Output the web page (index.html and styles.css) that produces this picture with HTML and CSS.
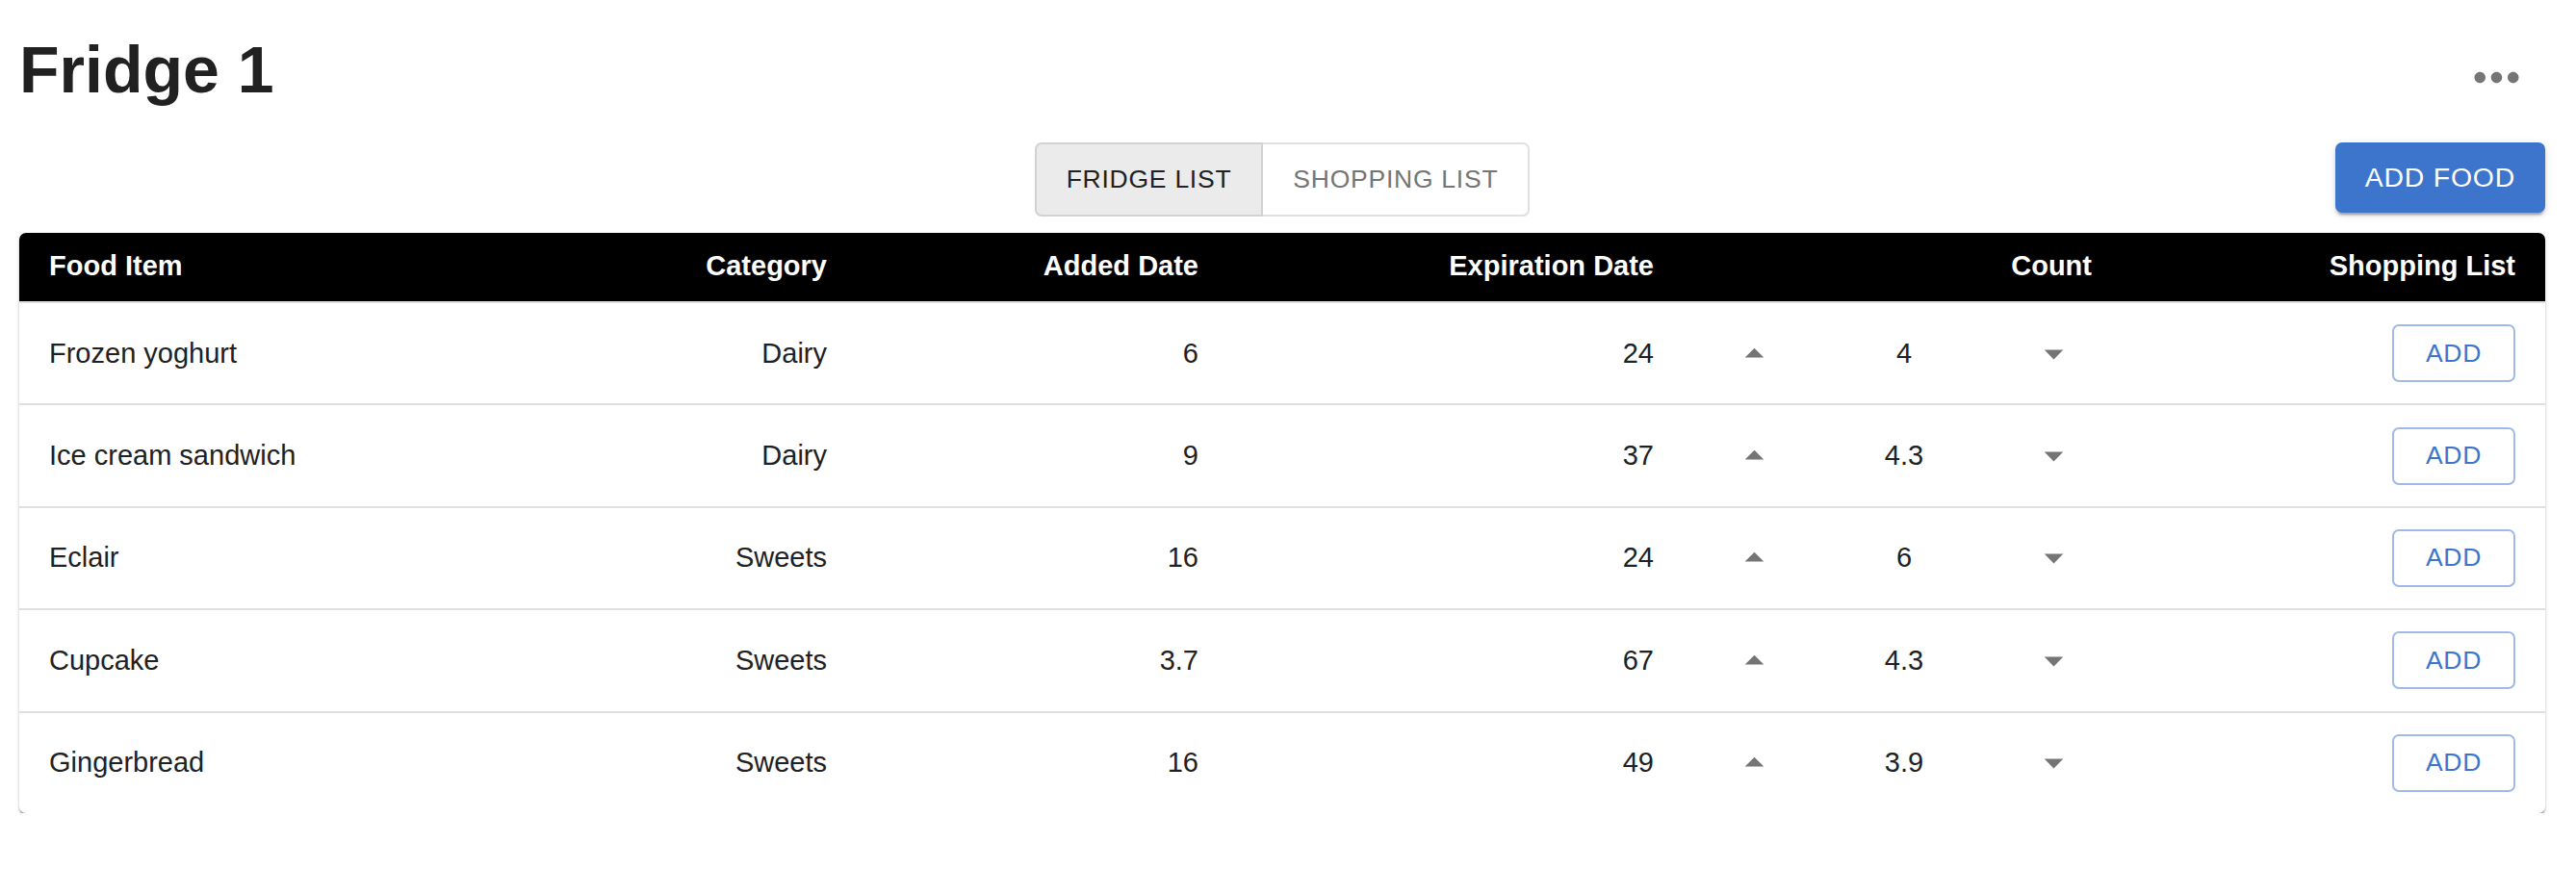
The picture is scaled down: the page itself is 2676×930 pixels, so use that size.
FILE: index.html
```html
<!DOCTYPE html>
<html lang="en">
<head>
<meta charset="utf-8">
<title>Fridge 1</title>
<link rel="stylesheet" href="styles.css">
</head>
<body>
<div class="page">
  <div class="titlebar">
    <h1 class="title">Fridge 1</h1>
    <button class="more-btn" aria-label="more">
      <svg class="more-icon" viewBox="0 0 24 24"><path d="M6 10c-1.1 0-2 .9-2 2s.9 2 2 2 2-.9 2-2-.9-2-2-2zm12 0c-1.1 0-2 .9-2 2s.9 2 2 2 2-.9 2-2-.9-2-2-2zm-6 0c-1.1 0-2 .9-2 2s.9 2 2 2 2-.9 2-2-.9-2-2-2z"/></svg>
    </button>
  </div>
  <div class="toolbar">
    <div class="spacer"></div>
    <div class="toggle">
      <button class="toggle-btn selected">FRIDGE LIST</button>
      <button class="toggle-btn">SHOPPING LIST</button>
    </div>
    <button class="add-food">ADD FOOD</button>
  </div>
  <div class="card">
    <table class="food-table">
      <colgroup>
        <col class="c1"><col class="c2"><col class="c3"><col class="c4"><col class="c5"><col class="c6">
      </colgroup>
      <thead>
        <tr>
          <th class="left">Food Item</th>
          <th>Category</th>
          <th>Added Date</th>
          <th>Expiration Date</th>
          <th>Count</th>
          <th>Shopping List</th>
        </tr>
      </thead>
      <tbody>
        <tr>
          <td class="left">Frozen yoghurt</td><td>Dairy</td><td>6</td><td>24</td>
          <td><div class="counter"><span class="arrow-btn"><svg viewBox="0 0 24 24"><path d="M7 14l5-5 5 5z"/></svg></span><span class="count">4</span><span class="arrow-btn"><svg viewBox="0 0 24 24"><path d="M7 10l5 5 5-5z"/></svg></span></div></td>
          <td><button class="add-btn">ADD</button></td>
        </tr>
        <tr>
          <td class="left">Ice cream sandwich</td><td>Dairy</td><td>9</td><td>37</td>
          <td><div class="counter"><span class="arrow-btn"><svg viewBox="0 0 24 24"><path d="M7 14l5-5 5 5z"/></svg></span><span class="count">4.3</span><span class="arrow-btn"><svg viewBox="0 0 24 24"><path d="M7 10l5 5 5-5z"/></svg></span></div></td>
          <td><button class="add-btn">ADD</button></td>
        </tr>
        <tr>
          <td class="left">Eclair</td><td>Sweets</td><td>16</td><td>24</td>
          <td><div class="counter"><span class="arrow-btn"><svg viewBox="0 0 24 24"><path d="M7 14l5-5 5 5z"/></svg></span><span class="count">6</span><span class="arrow-btn"><svg viewBox="0 0 24 24"><path d="M7 10l5 5 5-5z"/></svg></span></div></td>
          <td><button class="add-btn">ADD</button></td>
        </tr>
        <tr>
          <td class="left">Cupcake</td><td>Sweets</td><td>3.7</td><td>67</td>
          <td><div class="counter"><span class="arrow-btn"><svg viewBox="0 0 24 24"><path d="M7 14l5-5 5 5z"/></svg></span><span class="count">4.3</span><span class="arrow-btn"><svg viewBox="0 0 24 24"><path d="M7 10l5 5 5-5z"/></svg></span></div></td>
          <td><button class="add-btn">ADD</button></td>
        </tr>
        <tr>
          <td class="left">Gingerbread</td><td>Sweets</td><td>16</td><td>49</td>
          <td><div class="counter"><span class="arrow-btn"><svg viewBox="0 0 24 24"><path d="M7 14l5-5 5 5z"/></svg></span><span class="count">3.9</span><span class="arrow-btn"><svg viewBox="0 0 24 24"><path d="M7 10l5 5 5-5z"/></svg></span></div></td>
          <td><button class="add-btn">ADD</button></td>
        </tr>
      </tbody>
    </table>
  </div>
</div>
</body>
</html>
```

FILE: styles.css
```css
* { box-sizing: border-box; }
html, body { margin: 0; padding: 0; background: #fff; }
body {
  font-family: "Liberation Sans", Arial, Helvetica, sans-serif;
  color: #212121;
}
.page {
  padding: 30px 32px 0 20px;
}
.titlebar {
  display: flex;
  justify-content: space-between;
  align-items: flex-start;
  height: 118px;
}
.title {
  margin: 2px 0 0 0;
  font-size: 68px;
  line-height: 80px;
  font-weight: 700;
  color: #212121;
}
.more-btn {
  border: 0;
  background: transparent;
  padding: 16px;
  margin: 0;
  display: flex;
  cursor: pointer;
}
.more-icon {
  width: 69px;
  height: 69px;
  fill: #757575;
  display: block;
}
.toolbar {
  display: grid;
  grid-template-columns: 1fr auto 1fr;
  align-items: start;
}
.toggle {
  display: flex;
  height: 77px;
}
.toggle-btn {
  font-family: "Liberation Sans", Arial, Helvetica, sans-serif;
  font-size: 26.5px;
  letter-spacing: 0.75px;
  color: #757575;
  background: #fff;
  border: 2px solid #e0e0e0;
  padding: 0 31px;
  margin: 0;
  height: 77px;
  display: flex;
  align-items: center;
  cursor: pointer;
}
.toggle-btn:first-child {
  border-radius: 7px 0 0 7px;
}
.toggle-btn:last-child {
  border-radius: 0 7px 7px 0;
  border-left: 0;
}
.toggle-btn.selected {
  background: #ebebeb;
  color: #212121;
  border-color: #d2d2d2;
}
.add-food {
  justify-self: end;
  font-family: "Liberation Sans", Arial, Helvetica, sans-serif;
  font-size: 28.4px;
  letter-spacing: 0.8px;
  color: #fff;
  background: #3e75cc;
  border: 0;
  border-radius: 7px;
  height: 73px;
  padding: 0 31px;
  box-shadow: 0 5px 2px -3px rgba(0,0,0,0.2), 0 3px 3px 0 rgba(0,0,0,0.14), 0 2px 8px 0 rgba(0,0,0,0.12);
  cursor: pointer;
}
.card {
  margin-top: 17px;
  border-radius: 7px;
  overflow: hidden;
  background: #fff;
  box-shadow: 0 3px 2px -1px rgba(0,0,0,0.25), 0 2px 2px 0 rgba(0,0,0,0.16), 0 2px 5px 0 rgba(0,0,0,0.12);
}
.food-table {
  width: 100%;
  table-layout: fixed;
  border-collapse: separate;
  border-spacing: 0;
  font-size: 29px;
}
.c1 { width: 500px; }
.c2 { width: 370px; }
.c3 { width: 386px; }
.c4 { width: 473px; }
.c5 { width: 455px; }
.c6 { width: 440px; }
.food-table th {
  background: #000;
  color: #fff;
  font-weight: 700;
  text-align: right;
  height: 73px;
  padding: 0 31px 2px 31px;
  border-bottom: 2px solid #e0e0e0;
  background-clip: padding-box;
  white-space: nowrap;
}
.food-table td {
  text-align: right;
  vertical-align: middle;
  padding: 22px 31px;
  border-bottom: 2px solid #e0e0e0;
  height: 106.4px;
  color: #212121;
  white-space: nowrap;
}
.food-table tbody tr:last-child td {
  border-bottom: 0;
  height: 104.4px;
}
.food-table .left { text-align: left; }
.counter {
  display: flex;
  justify-content: flex-end;
  align-items: center;
}
.arrow-btn {
  width: 79px;
  height: 47px;
  display: flex;
  justify-content: center;
  align-items: center;
}
.arrow-btn svg {
  width: 47px;
  height: 47px;
  fill: #757575;
  display: block;
}
.count {
  width: 232px;
  text-align: center;
}
.add-btn {
  font-family: "Liberation Sans", Arial, Helvetica, sans-serif;
  font-size: 26.5px;
  letter-spacing: 0.75px;
  color: #3e75cc;
  background: #fff;
  border: 2px solid #9fbae7;
  border-radius: 7px;
  width: 128px;
  height: 60px;
  padding: 0;
  cursor: pointer;
}
```
